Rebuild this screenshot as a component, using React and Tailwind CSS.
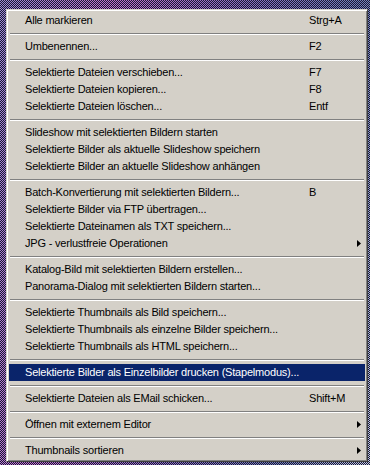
import React from "react";

const items = [
  { t: "Alle markieren", s: "Strg+A" },
  "sep",
  { t: "Umbenennen...", s: "F2" },
  "sep",
  { t: "Selektierte Dateien verschieben...", s: "F7" },
  { t: "Selektierte Dateien kopieren...", s: "F8" },
  { t: "Selektierte Dateien löschen...", s: "Entf" },
  "sep",
  { t: "Slideshow mit selektierten Bildern starten" },
  { t: "Selektierte Bilder als aktuelle Slideshow speichern" },
  { t: "Selektierte Bilder an aktuelle Slideshow anhängen" },
  "sep",
  { t: "Batch-Konvertierung mit selektierten Bildern...", s: "B" },
  { t: "Selektierte Bilder via FTP übertragen..." },
  { t: "Selektierte Dateinamen als TXT speichern..." },
  { t: "JPG - verlustfreie Operationen", sub: true },
  "sep",
  { t: "Katalog-Bild mit selektierten Bildern erstellen..." },
  { t: "Panorama-Dialog mit selektierten Bildern starten..." },
  "sep",
  { t: "Selektierte Thumbnails als Bild speichern..." },
  { t: "Selektierte Thumbnails als einzelne Bilder speichern..." },
  { t: "Selektierte Thumbnails als HTML speichern..." },
  "sep",
  { t: "Selektierte Bilder als Einzelbilder drucken (Stapelmodus)...", active: true },
  "sep",
  { t: "Selektierte Dateien als EMail schicken...", s: "Shift+M" },
  "sep",
  { t: "Öffnen mit externem Editor", sub: true },
  "sep",
  { t: "Thumbnails sortieren", sub: true },
];

function Arrow({ active }) {
  return (
    <svg width="4" height="7" viewBox="0 0 4 7" className="block">
      <path d="M0 0 L4 3.5 L0 7 Z" fill={active ? "#fff" : "#000"} />
    </svg>
  );
}

export default function App() {
  return (
    <div className="w-[370px] h-[465px] overflow-hidden bg-[linear-gradient(100deg,#9a8ad0_0%,#c070c8_25%,#8a70c0_55%,#7080b8_80%,#c0c8e0_100%)]">
      <div className="h-full bg-[repeating-conic-gradient(#1a1836_0%_25%,transparent_0%_50%)] bg-[length:2px_2px] pt-[9px] pl-[6px]">
        <div
          className="w-[362px] bg-[#D4D0C8] border border-t-[#D4D0C8] border-l-[#D4D0C8] border-r-[#404040] border-b-[#404040] shadow-[inset_1px_1px_#ffffff,inset_-1px_-1px_#808080] p-[2px] text-[11px] leading-none text-black tracking-[-0.2px]"
          style={{ fontFamily: '"Liberation Sans", Arial, sans-serif' }}
        >
          {items.map((it, i) =>
            it === "sep" ? (
              <div key={i} className="h-[9px] flex flex-col justify-center px-[1px]">
                <div className="h-[1px] bg-[#808080]" />
                <div className="h-[1px] bg-white" />
              </div>
            ) : (
              <div
                key={i}
                className={
                  "h-[17px] flex items-center whitespace-nowrap " +
                  (it.active ? "bg-[#0A246A] text-white" : "")
                }
              >
                <span className="w-[300px] pl-[16px]">{it.t}</span>
                <span className="flex-1">{it.s || ""}</span>
                <span className="w-[8px] flex items-center">
                  {it.sub ? <Arrow active={it.active} /> : null}
                </span>
              </div>
            )
          )}
        </div>
      </div>
    </div>
  );
}
